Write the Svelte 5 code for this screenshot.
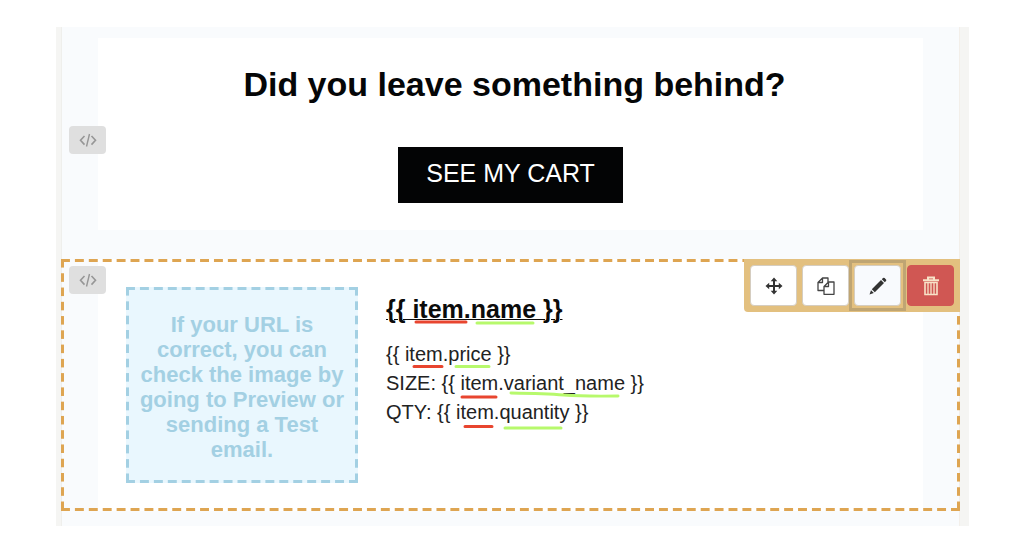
<script>
  const fields = [
    { label: '', token: '{{ item.price }}' },
    { label: 'SIZE: ', token: '{{ item.variant_name }}' },
    { label: 'QTY: ', token: '{{ item.quantity }}' }
  ];
  const title = '{{ item.name }}';
  const red = '#e8452f';
  const green = '#b7f96c';
</script>

{#snippet codeIcon()}
  <svg width="18" height="14" viewBox="0 0 18 14" fill="none" stroke="#969696" stroke-width="1.6" aria-hidden="true">
    <path d="M5.5 3 1.5 7.3l4 4.300M12.5 3l4 4.300-4 4.300" />
    <path d="M10.5 1 7.5 13.500" stroke-width="1.4" />
  </svg>
{/snippet}

<main class="canvas">
  <section class="block">
    <button class="code" aria-label="Edit code">{@render codeIcon()}</button>
    <div class="card intro">
      <h1>Did you leave something behind?</h1>
      <a class="cta" href="#cart">SEE MY CART</a>
    </div>
  </section>

  <section class="block selected">
    <button class="code" aria-label="Edit code">{@render codeIcon()}</button>
    <div class="card product">
      <div class="placeholder">
        <p>If your URL is correct, you can check the image by going to Preview or sending a Test email.</p>
        <div class="dashes"></div>
      </div>
      <div class="details">
        <h2><a href="#item">{title}</a></h2>
        {#each fields as f}
          <p>{f.label}{f.token}</p>
        {/each}
        <svg class="marks" width="260" height="150" viewBox="0 0 260 150" fill="none" stroke-width="3" stroke-linecap="round" aria-hidden="true">
          <path stroke={red} d="M30 35H80M28 79.500H56M76 110H110M79 139.500H106" />
          <path stroke={green} d="M91 36H147M70 79.500H103M125 106Q160 106.500 178 108T232 109M119 141H175" />
        </svg>
      </div>
    </div>
    <div class="dashes"></div>
    <div class="toolbar">
      <button aria-label="Move">
        <svg width="18" height="18" viewBox="0 0 18 18" fill="#333" aria-hidden="true">
          <path d="M9 .5 12.300 4.200H10V8h3.800V5.700L17.500 9 13.800 12.300V10H10v3.800h2.300L9 17.500 5.700 13.800H8V10H4.200v2.300L.5 9 4.200 5.700V8H8V4.200H5.700z" />
        </svg>
      </button>
      <button aria-label="Duplicate">
        <svg width="18" height="18" viewBox="0 0 18 18" fill="none" stroke="#444" stroke-width="1.300" stroke-linejoin="round" aria-hidden="true">
          <path d="M7 13.500H1V5.500L5.500 1H11v4M5.500 1v4.500H1" />
          <path d="M7 9.500 11.500 5H17v12.300H7zM11.500 5v4.500H7" />
        </svg>
      </button>
      <button class="focus" aria-label="Edit">
        <svg width="18" height="18" viewBox="0 0 18 18" fill="#333" aria-hidden="true">
          <path d="M.5 17.500 2 13.200 4.800 16zM2.800 12.200 12 3 15 6 5.800 15.200zM12.800 2.200 14 1Q14.800.3 15.600 1L17 2.400Q17.700 3.200 17 4L15.800 5.200z" />
        </svg>
      </button>
      <button class="danger" aria-label="Delete">
        <svg width="16" height="20" viewBox="0 0 16 20" fill="none" stroke="#f8e3c8" stroke-width="1.600" aria-hidden="true">
          <path d="M0 4.300H16M5 4V1.500H11V4" stroke-width="2" />
          <path d="M2 6.500H14V18.500H2z" />
          <path d="M5 6.500V18M8 6.500V18M11 6.500V18" stroke-width="1.300" />
        </svg>
      </button>
    </div>
  </section>
</main>

<style>
  :global(body) {
    margin: 0;
    background: #fff;
    font-family: "Liberation Sans", Arial, sans-serif;
  }
  h1, h2, p { margin: 0; }
  button { padding: 0; cursor: pointer; }
  .canvas {
    margin: 27px 55px 21px 56px;
    padding: 11px 0 15px;
    background: #f9fbfd;
    border-left: 5px solid #f5f5f3;
    border-right: 9px solid #f5f5f3;
    box-shadow: inset 1px 0 #efefec, inset -1px 0 #f3efea;
  }
  .block { position: relative; padding: 0 37px; }
  .card { background: #fff; }
  .intro {
    display: flex;
    flex-direction: column;
    align-items: center;
    padding: 27px 0;
    gap: 43px;
    color: #050607;
  }
  h1 { padding-left: 8px; font-size: 34px; line-height: 39px; }
  .cta {
    padding: 1px 28px 5px;
    font-size: 25px;
    line-height: 50px;
    background: #030405;
    color: #fff;
    text-decoration: none;
  }
  .code {
    position: absolute;
    left: 8px;
    top: 88px;
    width: 37px;
    height: 28px;
    display: grid;
    place-items: center;
    border: 0;
    border-radius: 4px;
    background: #dfdfdf;
  }
  .selected { margin-top: 29px; --dash: #dea552; }
  .selected .code { top: 7px; }
  .product {
    display: flex;
    align-items: flex-start;
    gap: 28px;
    padding: 28px;
  }
  .placeholder {
    position: relative;
    flex: none;
    box-sizing: border-box;
    width: 232px;
    padding: 25px 10px 21px;
    background: #e9f7fe;
    color: #a3d0e3;
    font-size: 22px;
    font-weight: bold;
    line-height: 25px;
    text-align: center;
    --dash: #a3d0e3;
  }
  .dashes {
    position: absolute;
    inset: 0;
    overflow: hidden;
    pointer-events: none;
  }
  .dashes::before, .dashes::after { content: ""; position: absolute; }
  .dashes::before {
    inset: 0 -5px 0 0;
    background:
      linear-gradient(90deg, var(--dash) 9px, transparent 9px) top left / 14px 3px round no-repeat,
      linear-gradient(90deg, var(--dash) 9px, transparent 9px) bottom left / 14px 3px round no-repeat;
  }
  .dashes::after {
    inset: 0 0 -5px 0;
    background:
      linear-gradient(var(--dash) 9px, transparent 9px) top left / 3px 14px no-repeat round,
      linear-gradient(var(--dash) 9px, transparent 9px) top right / 3px 14px no-repeat round;
  }
  .details { position: relative; color: #222; }
  h2 { margin: 8px 0 16px; font-size: 25px; line-height: 29px; }
  h2 a { color: #0b0b0b; text-decoration-thickness: 1px; }
  .details p { font-size: 20px; line-height: 29px; white-space: nowrap; }
  .marks { position: absolute; left: 0; top: 0; }
  .toolbar {
    position: absolute;
    top: 0;
    right: 0;
    display: flex;
    gap: 5px;
    padding: 6px;
    background: #e3c07f;
    border-radius: 0 0 0 4px;
  }
  .toolbar button {
    position: relative;
    width: 47px;
    height: 41px;
    display: grid;
    place-items: center;
    border: 1px solid #d5cdc0;
    border-radius: 4px;
    background: #fff;
  }
  .toolbar .focus { background: #f8fafd; }
  .toolbar .focus::after {
    content: "";
    position: absolute;
    inset: -6px;
    border: 3px solid #bfa573;
  }
  .toolbar .danger { margin-left: 1px; background: #d05753; border-color: #d05753; }
</style>
